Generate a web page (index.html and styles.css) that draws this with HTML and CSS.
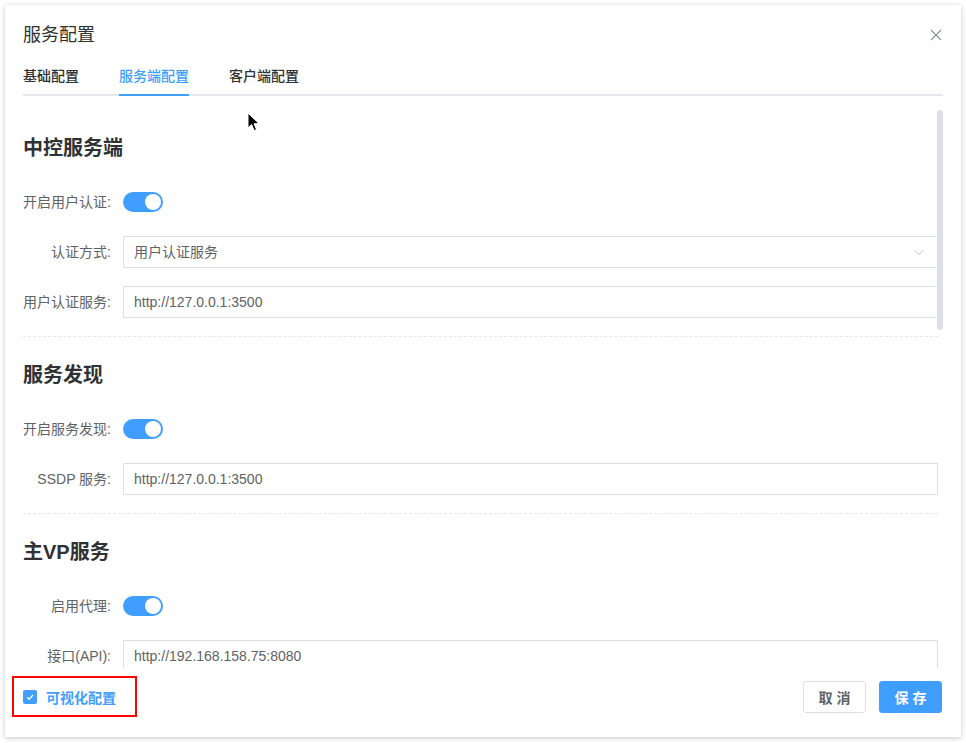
FILE: index.html
```html
<!DOCTYPE html>
<html lang="zh-CN">
<head>
    <meta charset="UTF-8">
    <meta name="viewport" content="width=device-width, initial-scale=1.0">
    <title>服务配置</title>
    <link rel="stylesheet" href="styles.css">
</head>
<body>
    <div class="dialog">
        <div class="dialog-header">
            <span class="dialog-title">服务配置</span>
            <button class="dialog-close" aria-label="关闭">
                <svg width="12" height="12" viewBox="0 0 12 12"><path d="M1 1L11 11M11 1L1 11" stroke="#909399" stroke-width="1.2" fill="none"/></svg>
            </button>
        </div>

        <div class="tabs">
            <div class="tab">基础配置</div>
            <div class="tab active">服务端配置</div>
            <div class="tab">客户端配置</div>
        </div>

        <div class="scroll-area">
            <div class="scroll-content">
                <section class="config-section">
                    <h2>中控服务端</h2>
                    <div class="form-row">
                        <label class="form-label">开启用户认证:</label>
                        <span class="switch on"><span class="knob"></span></span>
                    </div>
                    <div class="form-row">
                        <label class="form-label">认证方式:</label>
                        <div class="select">
                            <span>用户认证服务</span>
                            <svg width="12" height="12" viewBox="0 0 12 12"><path d="M1.5 4L6 8.5L10.5 4" stroke="#c0c4cc" stroke-width="1" fill="none"/></svg>
                        </div>
                    </div>
                    <div class="form-row">
                        <label class="form-label">用户认证服务:</label>
                        <div class="input">http://127.0.0.1:3500</div>
                    </div>
                </section>

                <section class="config-section">
                    <h2>服务发现</h2>
                    <div class="form-row">
                        <label class="form-label">开启服务发现:</label>
                        <span class="switch on"><span class="knob"></span></span>
                    </div>
                    <div class="form-row">
                        <label class="form-label">SSDP 服务:</label>
                        <div class="input">http://127.0.0.1:3500</div>
                    </div>
                </section>

                <section class="config-section">
                    <h2>主VP服务</h2>
                    <div class="form-row">
                        <label class="form-label">启用代理:</label>
                        <span class="switch on"><span class="knob"></span></span>
                    </div>
                    <div class="form-row">
                        <label class="form-label">接口(API):</label>
                        <div class="input">http://192.168.158.75:8080</div>
                    </div>
                </section>
            </div>
            <div class="scroll-thumb"></div>
        </div>

        <div class="dialog-footer">
            <label class="visual-toggle">
                <span class="checkbox">
                    <svg width="8" height="8" viewBox="0 0 8 8"><path d="M1 4.2L3.2 6.2L7 1.8" stroke="#fff" stroke-width="1.3" fill="none"/></svg>
                </span>
                <span class="visual-text">可视化配置</span>
            </label>
            <div class="footer-buttons">
                <button class="btn">取 消</button>
                <button class="btn btn-primary">保 存</button>
            </div>
        </div>
    </div>

    <svg class="cursor" width="14" height="20" viewBox="0 0 14 20">
        <path d="M1 1L1 16L4.6 12.6L7.2 18.6L9.6 17.6L7 11.8L12 11.6Z" fill="#000" stroke="#fff" stroke-width="1"/>
    </svg>
</body>
</html>
```

FILE: styles.css
```css
* {
    box-sizing: border-box;
    margin: 0;
    padding: 0;
}

body {
    font-family: "Liberation Sans", "Noto Sans CJK SC", sans-serif;
    background-color: #ffffff;
    color: #606266;
    font-size: 14px;
}

.dialog {
    margin: 5px;
    width: 956px;
    height: 732px;
    background-color: #ffffff;
    box-shadow: 0 1px 5px rgba(0, 0, 0, 0.22);
    padding: 0 18px;
    display: flex;
    flex-direction: column;
}

.dialog-header {
    display: flex;
    justify-content: space-between;
    align-items: center;
    padding-top: 18px;
    height: 42px;
}

.dialog-title {
    font-size: 18px;
    line-height: 24px;
    color: #303133;
}

.dialog-close {
    border: none;
    background: none;
    width: 12px;
    height: 12px;
    margin-right: 1px;
    display: flex;
}

.tabs {
    display: flex;
    margin-top: 9px;
    border-bottom: 2px solid #e4e7ed;
    height: 40px;
}

.tab {
    line-height: 40px;
    height: 40px;
    padding: 0 20px;
    font-size: 14px;
    font-weight: 500;
    color: #303133;
}

.tab:first-child {
    padding-left: 0;
}

.tab.active {
    color: #409eff;
    box-shadow: inset 0 -2px 0 #409eff;
    padding: 0;
    margin: 0 20px -2px;
}

.scroll-area {
    position: relative;
    flex: 1;
    overflow: hidden;
}

.scroll-content {
    padding: 40px 5px 0 0;
}

.scroll-thumb {
    position: absolute;
    right: 0;
    top: 14px;
    width: 6px;
    height: 220px;
    border-radius: 3px;
    background-color: #dddee6;
}

.config-section {
    border-bottom: 1px dashed #e4e7ed;
    margin-bottom: 26px;
}

.config-section h2 {
    font-size: 20px;
    line-height: 24px;
    font-weight: 700;
    color: #303133;
    margin-bottom: 26px;
}

.form-row {
    display: flex;
    align-items: center;
    height: 32px;
    margin-bottom: 18px;
}

.form-label {
    width: 100px;
    padding-right: 12px;
    text-align: right;
    color: #606266;
    line-height: 32px;
    flex-shrink: 0;
}

.switch {
    position: relative;
    width: 40px;
    height: 20px;
    border-radius: 10px;
    background-color: #dcdfe6;
}

.switch.on {
    background-color: #409eff;
}

.switch .knob {
    position: absolute;
    top: 2px;
    left: 2px;
    width: 16px;
    height: 16px;
    border-radius: 50%;
    background-color: #ffffff;
}

.switch.on .knob {
    left: 22px;
}

.input,
.select {
    flex: 1;
    height: 32px;
    line-height: 30px;
    border: 1px solid #dcdfe6;
    padding: 0 10px;
    color: #606266;
    background-color: #ffffff;
}

.select {
    display: flex;
    justify-content: space-between;
    align-items: center;
    padding-right: 12px;
}

.dialog-footer {
    display: flex;
    justify-content: space-between;
    align-items: center;
    padding: 8px 0 20px;
}

.visual-toggle {
    display: flex;
    align-items: center;
    margin-left: -11px;
    height: 41px;
    width: 125px;
    border: 2px solid #ff0000;
    padding-left: 9px;
}

.checkbox {
    width: 14px;
    height: 14px;
    border-radius: 2px;
    background-color: #409eff;
    display: flex;
    align-items: center;
    justify-content: center;
}

.visual-text {
    margin-left: 9px;
    color: #409eff;
    font-weight: 700;
}

.footer-buttons {
    display: flex;
    gap: 13px;
    margin-right: 1px;
}

.btn {
    width: 63px;
    height: 32px;
    border: 1px solid #dcdfe6;
    border-radius: 3px;
    background-color: #ffffff;
    color: #606266;
    font-family: inherit;
    font-size: 14px;
    font-weight: 700;
}

.btn-primary {
    background-color: #409eff;
    border-color: #409eff;
    color: #ffffff;
}

.cursor {
    position: absolute;
    left: 247px;
    top: 112px;
}
```
